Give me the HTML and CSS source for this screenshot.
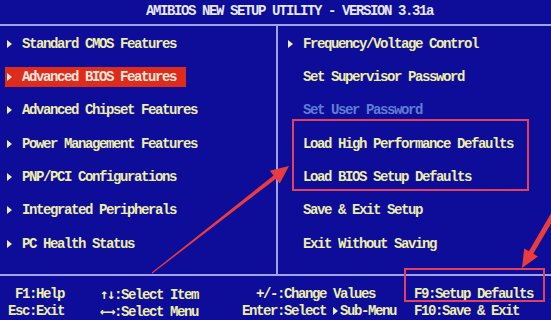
FILE: index.html
```
<!DOCTYPE html>
<html lang="en">
<head>
    <meta charset="UTF-8">
    <meta name="viewport" content="width=device-width, initial-scale=1.0">
    <title>AMIBIOS New Setup Utility</title>
    <link rel="stylesheet" href="styles.css">
</head>
<body>
    <div class="screen">
        <header class="title">AMIBIOS NEW SETUP UTILITY - VERSION 3.31a</header>

        <main class="panels">
            <ul class="menu menu-left">
                <li class="item"><span class="entry"><span class="mark"></span>Standard CMOS Features</span></li>
                <li class="item"><span class="entry active"><span class="mark"></span>Advanced BIOS Features</span></li>
                <li class="item"><span class="entry"><span class="mark"></span>Advanced Chipset Features</span></li>
                <li class="item"><span class="entry"><span class="mark"></span>Power Management Features</span></li>
                <li class="item"><span class="entry"><span class="mark"></span>PNP/PCI Configurations</span></li>
                <li class="item"><span class="entry"><span class="mark"></span>Integrated Peripherals</span></li>
                <li class="item"><span class="entry"><span class="mark"></span>PC Health Status</span></li>
            </ul>
            <ul class="menu menu-right">
                <li class="item"><span class="entry"><span class="mark"></span>Frequency/Voltage Control</span></li>
                <li class="item"><span class="entry"><span class="mark blank"></span>Set Supervisor Password</span></li>
                <li class="item"><span class="entry disabled"><span class="mark blank"></span>Set User Password</span></li>
                <li class="item"><span class="entry"><span class="mark blank"></span>Load High Performance Defaults</span></li>
                <li class="item"><span class="entry"><span class="mark blank"></span>Load BIOS Setup Defaults</span></li>
                <li class="item"><span class="entry"><span class="mark blank"></span>Save &amp; Exit Setup</span></li>
                <li class="item"><span class="entry"><span class="mark blank"></span>Exit Without Saving</span></li>
            </ul>
        </main>

        <footer class="hints">
            <div class="hint hint-right"><span class="key">F1</span>:Help</div>
            <div class="hint"><span class="key arrow-key">↑↓</span>:Select Item</div>
            <div class="hint hint-wide"><span class="key">+/-</span>:Change Values</div>
            <div class="hint"><span class="key">F9</span>:Setup Defaults</div>
            <div class="hint hint-right"><span class="key">Esc</span>:Exit</div>
            <div class="hint"><span class="key arrow-key">←→</span>:Select Menu</div>
            <div class="hint hint-wide"><span class="key">Enter</span>:Select <span class="sub-mark"></span>Sub-Menu</div>
            <div class="hint"><span class="key">F10</span>:Save &amp; Exit</div>
        </footer>

        <!-- annotations drawn over the screenshot -->
        <div class="callout callout-defaults"></div>
        <div class="callout callout-f9"></div>
        <svg class="arrows" width="551" height="320" viewBox="0 0 551 320">
            <polygon points="151.7,272.6 273.6,175.5 269.9,170.8 289,166 279.7,183.4 276,178.7 152.3,273.4"/>
            <polygon points="555.2,216.3 533.3,253.8 538,256.5 522,268 524.2,248.5 528.9,251.2 550.8,213.7"/>
        </svg>
    </div>
</body>
</html>
```

FILE: styles.css
```
body {
    margin: 0;
    background: #0d0d9a;
}

.screen {
    position: relative;
    width: 551px;
    height: 320px;
    overflow: hidden;
    background: #0d0d9a;
    color: #eeeeaa;
    font-family: "Liberation Mono", "DejaVu Sans Mono", monospace;
    font-weight: bold;
    font-size: 14px;
    letter-spacing: -1.4px;
}

.title {
    height: 24px;
    line-height: 22px;
    padding-left: 146px;
    color: #e6e6f6;
    border-bottom: 2px solid #a0a0f4;
    white-space: pre;
}

.panels {
    display: grid;
    grid-template-columns: 278px 1fr;
    height: 248px;
    border-bottom: 2px solid #a0a0f4;
}

.menu {
    list-style-type: none;
    margin: 0;
    padding: 1px 0 0;
}

.menu-left {
    border-right: 2px solid #a0a0f4;
    padding-left: 5px;
}

.menu-right {
    padding-left: 8px;
}

.item {
    display: flex;
    align-items: center;
    height: 33.33px;
}

.entry {
    display: inline-flex;
    align-items: center;
    height: 20px;
    padding: 0 10px 0 2px;
    white-space: pre;
}

.entry.active {
    background: #de2c1c;
    color: #fae6dc;
}

.entry.disabled {
    color: #5f7ed2;
}

.mark {
    width: 0;
    height: 0;
    margin-right: 10px;
    border-top: 4px solid transparent;
    border-bottom: 4px solid transparent;
    border-left: 5px solid currentColor;
}

.mark.blank {
    visibility: hidden;
}

.hints {
    display: grid;
    grid-template-columns: 100px 80px 234px 1fr;
    padding-top: 10px;
    line-height: 16px;
}

.hint {
    white-space: pre;
}

.arrow-key {
    font-family: "DejaVu Sans Mono", monospace;
}

.hint-right .key {
    display: inline-block;
    width: 29px;
    text-align: right;
}

.hint-wide .key {
    display: inline-block;
    width: 97px;
    text-align: right;
}

.sub-mark {
    display: inline-block;
    width: 0;
    height: 0;
    margin-right: 2px;
    border-top: 4px solid transparent;
    border-bottom: 4px solid transparent;
    border-left: 5px solid currentColor;
}

.callout {
    position: absolute;
    border: 2px solid #e2405c;
    box-sizing: border-box;
}

.callout-defaults {
    left: 292px;
    top: 119px;
    width: 237px;
    height: 72px;
}

.callout-f9 {
    left: 404px;
    top: 268px;
    width: 141px;
    height: 34px;
}

.arrows {
    position: absolute;
    left: 0;
    top: 0;
}

.arrows polygon {
    fill: #ea3c3c;
}
```
